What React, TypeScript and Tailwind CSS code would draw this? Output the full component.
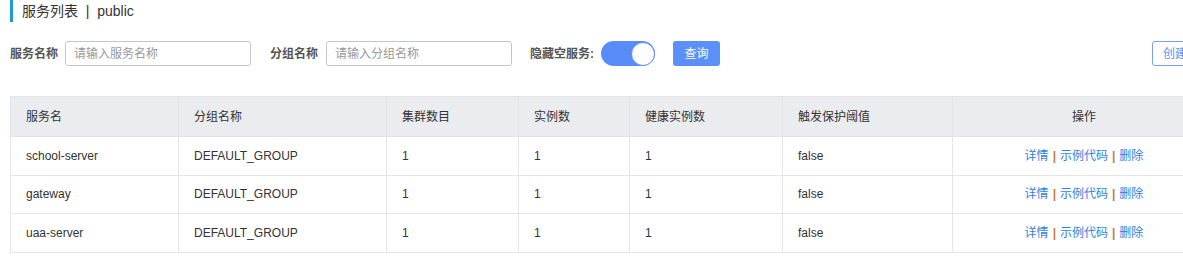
import React from "react";

const cols = [
  { label: "服务名", w: 168 },
  { label: "分组名称", w: 208 },
  { label: "集群数目", w: 132 },
  { label: "实例数", w: 111 },
  { label: "健康实例数", w: 153 },
  { label: "触发保护阈值", w: 170 },
  { label: "操作", w: 263 },
];

const rows = [
  ["school-server", "DEFAULT_GROUP", "1", "1", "1", "false"],
  ["gateway", "DEFAULT_GROUP", "1", "1", "1", "false"],
  ["uaa-server", "DEFAULT_GROUP", "1", "1", "1", "false"],
];

export default function App() {
  return (
    <div
      className="w-[1183px] h-[267px] overflow-hidden bg-white text-[#333]"
      style={{ fontFamily: '"Liberation Sans", "Noto Sans CJK SC", sans-serif' }}
    >
      <div className="w-[1230px] pl-[10px]">
        <div className="flex items-center h-[22px]">
          <div className="w-[3px] h-[22px] bg-[#1f9ad6]" />
          <div className="ml-[9px] text-[14px] leading-[22px] text-[#333] whitespace-nowrap">服务列表 &nbsp;|&nbsp; public</div>
        </div>
        <div className="flex items-center mt-[19px] h-[25px] whitespace-nowrap">
          <span className="w-[43px] shrink-0 text-[12px] font-bold text-[#555]">服务名称</span>
          <input
            className="ml-[12px] shrink-0 w-[186px] h-[25px] border border-[#c4c6cf] rounded-[3px] px-[8px] text-[12px] outline-none placeholder:text-[#999]"
            placeholder="请输入服务名称"
          />
          <span className="ml-[19px] w-[45px] shrink-0 text-[12px] font-bold text-[#555]">分组名称</span>
          <input
            className="ml-[11px] shrink-0 w-[186px] h-[25px] border border-[#c4c6cf] rounded-[3px] px-[8px] text-[12px] outline-none placeholder:text-[#999]"
            placeholder="请输入分组名称"
          />
          <span className="ml-[18px] w-[63px] shrink-0 text-[12px] font-bold text-[#555]">隐藏空服务:</span>
          <div className="ml-[8px] shrink-0 w-[54px] h-[25px] rounded-full bg-[#5a8cf9] flex items-center justify-end">
            <div className="w-[24px] h-[24px] rounded-full bg-white border border-[#5a8cf9]" />
          </div>
          <button className="ml-[18px] shrink-0 w-[47px] h-[25px] rounded-[3px] bg-[#5b8ff9] text-white text-[12px]">
            查询
          </button>
          <button className="ml-[432px] shrink-0 w-[70px] h-[25px] rounded-[3px] border border-[#7a9ff8] bg-white text-[#5b8ff9] text-[12px]">
            创建服务
          </button>
        </div>
        <table className="mt-[30px] border-collapse table-fixed w-[1205px] text-[12px]">
          <colgroup>
            {cols.map((c) => (
              <col key={c.label} style={{ width: c.w }} />
            ))}
          </colgroup>
          <thead>
            <tr className="h-[40px] bg-[#ebecf0]">
              {cols.map((c, i) => (
                <th
                  key={c.label}
                  className={`border border-[#e3e4e8] font-normal text-[#333] ${
                    i === 6 ? "text-center" : "text-left pl-[15px]"
                  }`}
                >
                  {c.label}
                </th>
              ))}
            </tr>
          </thead>
          <tbody>
            {rows.map((r, ri) => (
              <tr key={ri} className="h-[38.5px] bg-white">
                {r.map((v, i) => (
                  <td key={i} className="border border-[#e6e6e6] pl-[15px] text-[#333]">
                    {v}
                  </td>
                ))}
                <td className="border border-[#e6e6e6] text-center whitespace-nowrap">
                  <span className="text-[#2e7fe0]">详情</span>
                  <span className="mx-[4px] text-[#c0813a] font-bold">|</span>
                  <span className="text-[#2e7fe0]">示例代码</span>
                  <span className="mx-[4px] text-[#c0813a] font-bold">|</span>
                  <span className="text-[#2e7fe0]">删除</span>
                </td>
              </tr>
            ))}
          </tbody>
        </table>
      </div>
    </div>
  );
}
